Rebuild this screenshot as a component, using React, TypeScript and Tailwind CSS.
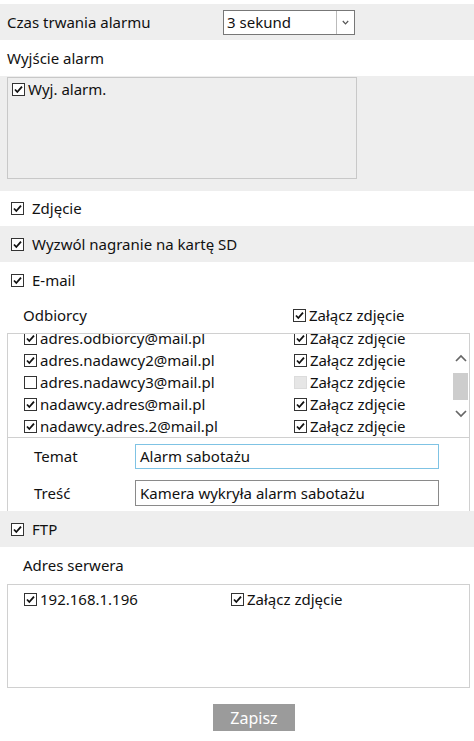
import React from "react";

function Box({ checked = true, disabled = false }: { checked?: boolean; disabled?: boolean }) {
  if (disabled) {
    return <span className="inline-block h-[13px] w-[13px] shrink-0 border border-[#dcdcdc] bg-[#e6e6e6]" />;
  }
  return (
    <svg width="13" height="13" viewBox="0 0 13 13" className="shrink-0">
      <rect x="0.5" y="0.5" width="12" height="12" fill="#fff" stroke="#333" />
      {checked && <path d="M3 6.5 L5.3 9 L10 3.6" fill="none" stroke="#111" strokeWidth="1.8" />}
    </svg>
  );
}

function Check({ label, className = "" }: { label: string; className?: string }) {
  return (
    <div className={`flex items-center ${className}`}>
      <Box />
      <span className="ml-[3px]">{label}</span>
    </div>
  );
}

const recipients = [
  { mail: "adres.odbiorcy@mail.pl", on: true, pic: true },
  { mail: "adres.nadawcy2@mail.pl", on: true, pic: true },
  { mail: "adres.nadawcy3@mail.pl", on: false, pic: false },
  { mail: "nadawcy.adres@mail.pl", on: true, pic: true },
  { mail: "nadawcy.adres.2@mail.pl", on: true, pic: true },
];

export default function App() {
  return (
    <div className="w-[474px] bg-white text-[15px] leading-none text-[#111]" style={{ fontFamily: '"Segoe UI", "Noto Sans", sans-serif' }}>
      <div className="h-[4px]" />
      <div className="flex h-[36px] items-center bg-[#eeeeee]">
        <span className="w-[223px] pl-[7px]">Czas trwania alarmu</span>
        <div className="flex h-[25px] w-[132px] items-stretch border border-[#777] bg-white">
          <span className="flex flex-1 items-center pl-[3px]">3 sekund</span>
          <span className="flex w-[18px] items-center justify-center border-l border-[#bbb]">
            <svg width="7" height="5" viewBox="0 0 7 5">
              <path d="M0.8 1 L3.5 3.8 L6.2 1" fill="none" stroke="#555" strokeWidth="1.2" />
            </svg>
          </span>
        </div>
      </div>
      <div className="flex h-[36px] items-center pl-[7px]">Wyjście alarm</div>
      <div className="h-[115px] bg-[#eeeeee] pl-[7px] pt-[1px]">
        <div className="h-[102px] w-[350px] border border-[#c8c8c8] pl-[4px] pt-[4px]">
          <Check label="Wyj. alarm." />
        </div>
      </div>
      <div className="flex h-[35px] items-center pl-[11px]">
        <Box />
        <span className="ml-[8px]">Zdjęcie</span>
      </div>
      <div className="flex h-[36px] items-center bg-[#eeeeee] pl-[11px]">
        <Box />
        <span className="ml-[8px]">Wyzwól nagranie na kartę SD</span>
      </div>
      <div className="flex h-[36px] items-center pl-[11px]">
        <Box />
        <span className="ml-[8px]">E-mail</span>
      </div>

      <div className="flex h-[35px] items-center">
        <span className="w-[293px] pl-[23px]">Odbiorcy</span>
        <Check label="Załącz zdjęcie" />
      </div>
      <div className="ml-[7px] mr-[4px] border-x border-[#d0d0d0]">
        <div className="flex h-[105px] border-y border-[#d0d0d0]">
          <div className="flex-1 overflow-hidden">
            {/* list is scrolled a few px down */}
            <div className="-mt-[7px]">
              {recipients.map((r) => (
                <div key={r.mail} className="flex h-[22px] items-center">
                  <div className="flex w-[286px] items-center pl-[16px]">
                    <Box checked={r.on} />
                    <span className="ml-[3px]">{r.mail}</span>
                  </div>
                  <div className="flex items-center">
                    <Box checked={r.pic} disabled={!r.pic} />
                    <span className="ml-[3px]">Załącz zdjęcie</span>
                  </div>
                </div>
              ))}
            </div>
          </div>
          <div className="flex w-[17px] flex-col items-center">
            <svg width="12" height="8" viewBox="0 0 12 8" className="mt-[20px]">
              <path d="M1 7 L6 2 L11 7" fill="none" stroke="#666" strokeWidth="1.7" />
            </svg>
            <div className="mt-[11px] h-[27px] w-[15px] bg-[#cdcdcd]" />
            <svg width="12" height="8" viewBox="0 0 12 8" className="mt-[10px]">
              <path d="M1 1 L6 6 L11 1" fill="none" stroke="#666" strokeWidth="1.7" />
            </svg>
          </div>
        </div>
        <div className="h-[73px] pt-[6px]">
          <div className="flex h-[25px] items-center">
            <span className="w-[127px] pl-[26px]">Temat</span>
            <div className="flex h-[25px] w-[304px] items-center border border-[#7fc3e4] pl-[4px]">Alarm sabotażu</div>
          </div>
          <div className="mt-[11px] flex h-[26px] items-center">
            <span className="w-[127px] pl-[26px]">Treść</span>
            <div className="flex h-[26px] w-[304px] items-center border border-[#8a8a8a] pl-[4px]">Kamera wykryła alarm sabotażu</div>
          </div>
        </div>
      </div>

      <div className="flex h-[36px] items-center bg-[#eeeeee] pl-[11px]">
        <Box />
        <span className="ml-[8px]">FTP</span>
      </div>
      <div className="flex h-[37px] items-center pl-[23px]">Adres serwera</div>
      <div className="ml-[7px] mr-[4px] h-[104px] border border-[#d0d0d0] pt-[7px]">
        <div className="flex items-center">
          <div className="flex w-[223px] items-center pl-[16px]">
            <Box />
            <span className="ml-[3px]">192.168.1.196</span>
          </div>
          <Check label="Załącz zdjęcie" />
        </div>
      </div>
      <div className="pb-[10px] pl-[213px] pt-[16px]">
        <button className="h-[27px] w-[82px] bg-[#9b9b9b] text-[16px] text-white">Zapisz</button>
      </div>
    </div>
  );
}
